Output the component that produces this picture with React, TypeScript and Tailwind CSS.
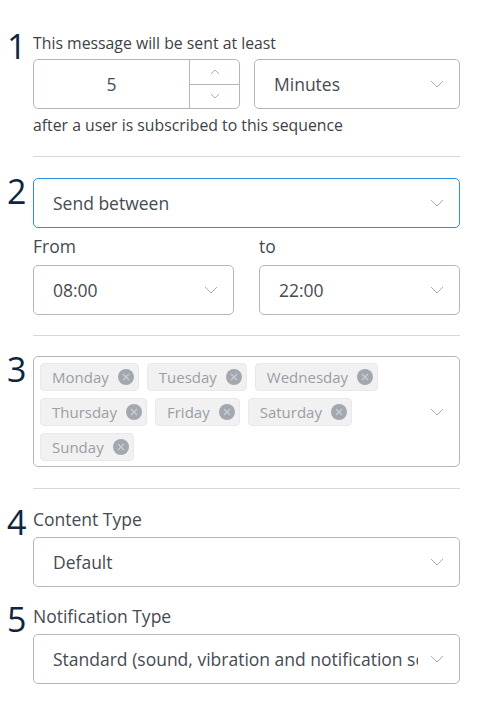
import React from "react";

const font = { fontFamily: '"Open Sans", "Noto Sans", sans-serif' };

function Chevron({ className = "" }: { className?: string }) {
  return (
    <svg width="14" height="8" viewBox="0 0 14 8" className={className}>
      <path d="M1 1l6 6 6-6" fill="none" stroke="#a9adb3" strokeWidth="1" />
    </svg>
  );
}

function Select({
  value,
  active = false,
  className = "",
}: {
  value: string;
  active?: boolean;
  className?: string;
}) {
  return (
    <div
      className={
        "flex h-[50px] items-center justify-between rounded-[5px] border bg-white pl-[19px] pr-[15px] " +
        (active ? "border-[#2b8de3] " : "border-[#b3b7bd] ") +
        className
      }
    >
      <span className="min-w-0 overflow-hidden whitespace-nowrap text-[17.5px] text-[#454b52]">{value}</span>
      <Chevron className="ml-3 shrink-0" />
    </div>
  );
}

function Step({ n, children }: { n: string; children: React.ReactNode }) {
  return (
    <div className="flex">
      <div className="w-[33px] shrink-0 pl-[7px] text-[34px] leading-[26px] text-[#0f2640]">
        {n}
      </div>
      <div className="min-w-0 flex-1">{children}</div>
    </div>
  );
}

function Chip({ label }: { label: string }) {
  return (
    <div className="flex h-[28px] items-center gap-[9px] rounded-[4px] border border-[#e8e9eb] bg-[#f1f1f2] pl-[11px] pr-[4px] text-[15px] text-[#9a9ea4]">
      <span>{label}</span>
      <svg width="16" height="16" viewBox="0 0 16 16">
        <circle cx="8" cy="8" r="8" fill="#a3a7af" />
        <path d="M5 5l6 6M11 5l-6 6" stroke="#c9ccd1" strokeWidth="1.4" />
      </svg>
    </div>
  );
}

const Divider = () => <div className="ml-[33px] h-px bg-[#d6d8db]" />;

export default function App() {
  const days = ["Monday", "Tuesday", "Wednesday", "Thursday", "Friday", "Saturday", "Sunday"];
  return (
    <div className="min-h-[715px] w-[490px] bg-white pr-[30px] pt-[33px]" style={font}>
      <Step n="1">
        <div className="text-[15.8px] leading-[20px] text-[#3d4247]">This message will be sent at least</div>
        <div className="mt-[6px] flex gap-[14px]">
          <div className="flex h-[50px] w-[207px] rounded-[5px] border border-[#b3b7bd]">
            <div className="flex flex-1 items-center justify-center text-[17.5px] text-[#454b52]">5</div>
            <div className="flex w-[50px] flex-col border-l border-[#b3b7bd]">
              <div className="flex flex-1 items-center justify-center border-b border-[#b3b7bd]">
                <svg width="10" height="6" viewBox="0 0 10 6">
                  <path d="M1 5l4-4 4 4" fill="none" stroke="#a9adb3" />
                </svg>
              </div>
              <div className="flex flex-1 items-center justify-center">
                <svg width="10" height="6" viewBox="0 0 10 6">
                  <path d="M1 1l4 4 4-4" fill="none" stroke="#a9adb3" />
                </svg>
              </div>
            </div>
          </div>
          <Select value="Minutes" className="flex-1" />
        </div>
        <div className="mt-[6px] text-[15.8px] leading-[20px] text-[#3d4247]">
          after a user is subscribed to this sequence
        </div>
      </Step>

      <div className="mt-[21px]">
        <Divider />
      </div>

      <div className="mt-[21px]">
        <Step n="2">
          <Select value="Send between" active />
          <div className="mt-[8px] grid grid-cols-2 gap-[25px]">
            <div>
              <div className="text-[17.5px] leading-[20px] text-[#454b52]">From</div>
              <Select value="08:00" className="mt-[9px]" />
            </div>
            <div>
              <div className="text-[17.5px] leading-[20px] text-[#454b52]">to</div>
              <Select value="22:00" className="mt-[9px]" />
            </div>
          </div>
        </Step>
      </div>

      <div className="mt-[20px]">
        <Divider />
      </div>

      <div className="mt-[20px]">
        <Step n="3">
          <div className="flex h-[111px] items-center rounded-[5px] border border-[#b3b7bd] pr-[15px]">
            <div className="flex h-full flex-1 flex-wrap content-start gap-x-[8px] gap-y-[7px] pl-[6px] pt-[6px]">
              {days.map((d) => (
                <Chip key={d} label={d} />
              ))}
            </div>
            <Chevron className="shrink-0" />
          </div>
        </Step>
      </div>

      <div className="mt-[21px]">
        <Divider />
      </div>

      <div className="mt-[20px]">
        <Step n="4">
          <div className="text-[17.5px] leading-[20px] text-[#454b52]">Content Type</div>
          <Select value="Default" className="mt-[8px]" />
        </Step>
      </div>

      <div className="mt-[19px]">
        <Step n="5">
          <div className="text-[17.5px] leading-[20px] text-[#454b52]">Notification Type</div>
          <Select value="Standard (sound, vibration and notification screen)" className="mt-[8px]" />
        </Step>
      </div>
    </div>
  );
}
